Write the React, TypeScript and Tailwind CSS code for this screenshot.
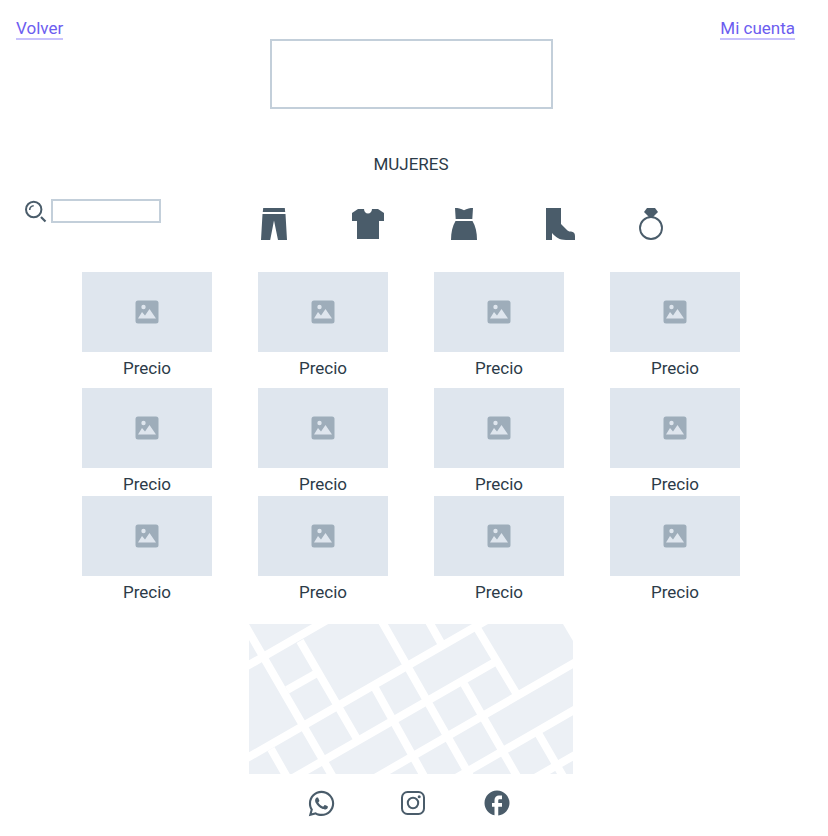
import type { ReactNode } from "react";
import { FaWhatsapp } from "react-icons/fa6";
import { MdFacebook } from "react-icons/md";

const rows = ["top", "middle", "bottom"];
const columns = [1, 2, 3, 4];

function TextLink({ children }: { children: ReactNode }) {
  return (
    <a href="#" className="border-b-2 border-[#c8c2fc] leading-5 text-[#6c5df0]">
      {children}
    </a>
  );
}

function SearchIcon() {
  return (
    <svg className="h-6 w-[22px]" viewBox="0 0 22 24" fill="none" stroke="#4a5c6a" strokeWidth="2" aria-hidden="true">
      <circle cx="8.7" cy="10.5" r="7.7" />
      <path d="M4.700 11a4.300 4.300 0 0 1 4-4.300" strokeWidth="1.6" />
      <path d="M16 18l4.500 4.500" strokeWidth="2.2" />
    </svg>
  );
}

function PantsIcon() {
  return (
    <svg className="h-8 w-[27px]" viewBox="0 0 27 32" fill="currentColor" aria-hidden="true">
      <path d="M2.200 0h21.600l.4 4H1.800zM1.500 6h23L26 32h-9L13 12.500 9.200 32H0z" />
    </svg>
  );
}

function ShirtIcon() {
  return (
    <svg className="size-8" viewBox="0 0 32 32" fill="currentColor" aria-hidden="true">
      <path d="M6 1h6c.2 2.800 1.700 4.500 4 4.500S19.800 3.800 20 1h6l6 4v8h-5v18H5V13H0V5z" />
    </svg>
  );
}

function DressIcon() {
  return (
    <svg className="size-8" viewBox="0 0 32 32" fill="currentColor" aria-hidden="true">
      <path d="M7 0c3 0 6 .6 9 2.200C19 .6 22 0 25 0l-.7 11H7.700zM7.500 13h17C27.500 18 29 24.500 29 32H3c0-7.500 1.500-14 4.500-19z" />
    </svg>
  );
}

function BootIcon() {
  return (
    <svg className="h-8 w-[31px]" viewBox="0 0 31 32" fill="currentColor" aria-hidden="true">
      <path d="M2 0h15v16l6.500 6.500c1.200.9 2.300 1.100 3.500 1.100 2.500.2 4 1.600 4 4.400v4h-9c-6.500 0-10.500-2.800-14-7v7H2z" />
    </svg>
  );
}

function RingIcon() {
  return (
    <svg className="h-8 w-6" viewBox="0 0 24 32" aria-hidden="true">
      <path d="M8 0h8l3 4-5 5h-4L5 4z" fill="currentColor" />
      <circle cx="12" cy="20" r="11" fill="none" stroke="currentColor" strokeWidth="1.9" />
    </svg>
  );
}

function InstagramIcon() {
  return (
    <svg className="size-[26px]" viewBox="0 0 26 26" fill="none" stroke="currentColor" strokeWidth="2" aria-hidden="true">
      <rect x="2" y="2" width="22" height="22" rx="5.500" />
      <circle cx="13" cy="13" r="5.200" />
      <circle cx="19.200" cy="6.800" r="1.500" fill="currentColor" stroke="none" />
    </svg>
  );
}

function PictureIcon() {
  return (
    <svg className="size-6" viewBox="0 0 24 24" aria-hidden="true">
      <rect x=".5" y=".5" width="23" height="23" rx="2.500" fill="#9eadba" />
      <circle cx="8.500" cy="7" r="2.200" fill="#dfe6ee" />
      <path d="M3 18.500l4-6.500 3 3.500L14.500 9l6.500 9.500z" fill="#dfe6ee" />
    </svg>
  );
}

function StreetMap() {
  return (
    <svg className="h-auto w-[324px] max-w-full" viewBox="0 0 324 150" role="img" aria-label="Mapa">
      <path d="M0 0h314l10 17v133H0z" fill="#ecf0f5" />
      <g stroke="#ffffff" strokeWidth="8" fill="none">
        <path d="M-7 45L79-4.500M-7 137L238-4M44 154L246 38M126 154L331 35.600M207 154L331 82.500M286 154L331 128" />
        <path d="M38 66L68 49" />
        <path d="M-7-4L84.500 154M51 17L108 115M132-4L222 154M179-4L192 19M228 4L267 69M215 60L269 154M126 64L176 154M22 125L38.500 154M289 109L315 154" />
      </g>
    </svg>
  );
}

const categories = [
  { name: "Pantalones", Icon: PantsIcon },
  { name: "Camisetas", Icon: ShirtIcon },
  { name: "Vestidos", Icon: DressIcon },
  { name: "Zapatos", Icon: BootIcon },
  { name: "Joyas", Icon: RingIcon },
];

function Product() {
  return (
    <li>
      <a href="#" className="block">
        <span className="flex h-20 items-center justify-center bg-[#dfe6ee]">
          <PictureIcon />
        </span>
        <span className="block pt-1 text-center leading-6">Precio</span>
      </a>
    </li>
  );
}

export default function App() {
  return (
    <div className="min-h-screen bg-white pb-4 font-['Roboto',sans-serif] text-[17px] text-[#2c3b48]">
      <header className="grid grid-cols-[1fr_283px_1fr] items-start pt-[18px] pr-[22px] pl-4">
        <div className="flex">
          <TextLink>Volver</TextLink>
        </div>
        <div className="mt-[21px] h-[70px] border-2 border-[#c3cfda]" />
        <div className="flex justify-end pr-[11px]">
          <TextLink>Mi cuenta</TextLink>
        </div>
      </header>

      <main className="pr-1.5">
        <h1 className="mt-[43px] text-center leading-6">MUJERES</h1>

        <div className="mt-[23px] flex items-start gap-[100px] pl-[25px]">
          <form role="search" className="flex items-center gap-1">
            <label htmlFor="search" aria-label="Buscar">
              <SearchIcon />
            </label>
            <input id="search" type="search" className="h-6 w-[110px] border-2 border-[#c3cfda] px-1 text-sm outline-none" />
          </form>
          <nav aria-label="Categorías" className="flex gap-16 pt-[9px] text-[#4a5c6a]">
            {categories.map(({ name, Icon }) => (
              <button key={name} type="button" aria-label={name}>
                <Icon />
              </button>
            ))}
          </nav>
        </div>

        <div className="mx-auto mt-8 max-w-[658px]">
          {rows.map((row) => (
            <ul key={row} className="grid grid-cols-4 gap-x-[46px] first:mb-2">
              {columns.map((column) => (
                <Product key={column} />
              ))}
            </ul>
          ))}
        </div>

        <div className="mt-5 flex justify-center">
          <StreetMap />
        </div>
      </main>

      <footer className="mt-4 grid grid-cols-[92px_84px_26px] justify-center pr-2.5 text-[#4a5c6a]">
        <a href="#" aria-label="WhatsApp" className="flex size-[26px] items-center justify-center">
          <FaWhatsapp className="size-[29px] shrink-0" />
        </a>
        <a href="#" aria-label="Instagram" className="flex size-[26px] items-center justify-center">
          <InstagramIcon />
        </a>
        <a href="#" aria-label="Facebook" className="flex size-[26px] items-center justify-center">
          <MdFacebook className="size-[30px] shrink-0" />
        </a>
      </footer>
    </div>
  );
}
